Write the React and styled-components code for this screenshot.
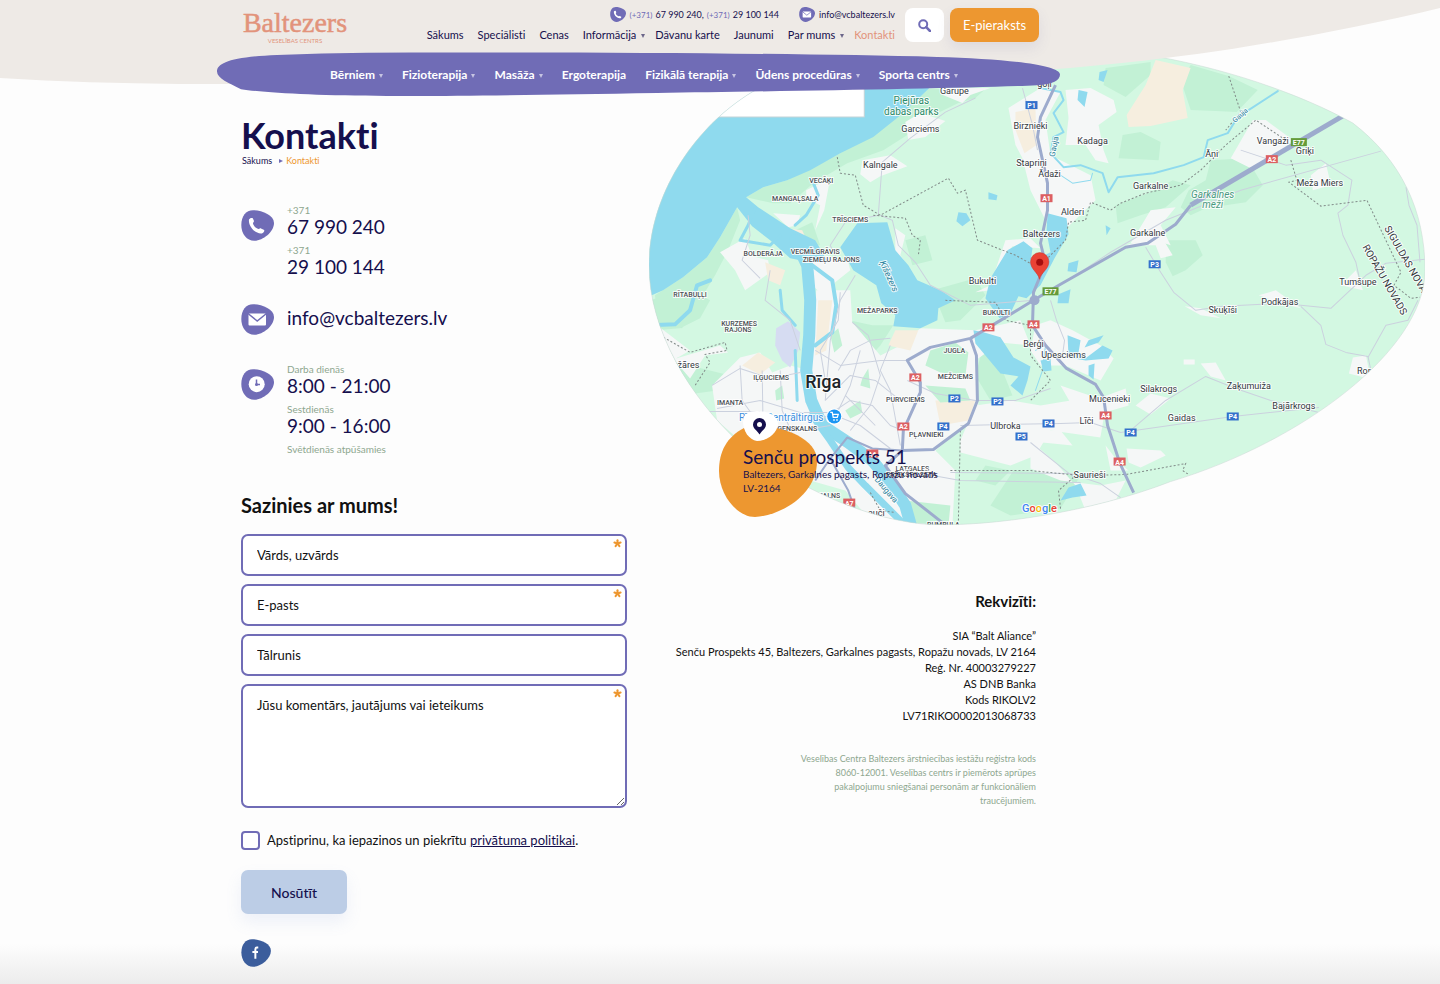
import React from "react";
import styled, { createGlobalStyle } from "styled-components";

const navy = "#150f4d";
const violet = "#706cb6";
const orange = "#ed9730";
const salmon = "#e2937b";
const sage = "#8ea78f";

const GlobalStyle = createGlobalStyle`
  * {
    box-sizing: border-box;
  }
  body {
    margin: 0;
    background: #fdfdfd;
    color: #111;
    font-family: Lato, "Open Sans", sans-serif;
    font-size: 13px;
    font-variant-ligatures: none;
  }
  h1, h2, p, ul {
    margin: 0;
    padding: 0;
  }
  a {
    color: inherit;
    text-decoration: none;
  }
  button, input, textarea {
    font-family: inherit;
    font-variant-ligatures: none;
  }
`;

const Page = styled.div`
  min-height: 100vh;
  overflow: hidden;
  background: linear-gradient(#fdfdfd, #ececec) bottom / 100% 40px no-repeat;
`;

//header
const Header = styled.header`
  position: relative;
  z-index: 2;
`;

const HeaderShape = styled.svg`
  position: absolute;
  top: 0;
  left: 0;
  width: 100%;
  height: 86px;
`;

const TopBar = styled.div`
  position: relative;
  display: flex;
  align-items: flex-start;
  max-width: 1039px;
  height: 52px;
  padding: 8px 0 0 241px;
`;

const Logo = styled.a`
  display: flex;
  flex-direction: column;
  align-items: center;
  width: 108px;
  color: ${salmon};
  font-family: "Liberation Serif", serif;
  font-size: 28px;
  line-height: 29px;
  -webkit-text-stroke: 0.5px ${salmon};
  small {
    font-family: Lato, sans-serif;
    font-size: 6px;
    line-height: 8px;
    -webkit-text-stroke: 0;
  }
`;

const TopLinks = styled.div`
  flex: 1;
  display: flex;
  flex-direction: column;
  align-items: flex-end;
  gap: 6px;
  margin-right: 10px;
  color: ${navy};
`;

const PhoneRow = styled.div`
  display: flex;
  align-items: center;
  gap: 3px;
  height: 13px;
  font-size: 9px;
  white-space: nowrap;
  small {
    color: ${violet};
    font-size: 8px;
  }
  svg {
    width: 16px;
    height: 15px;
    margin-right: 1px;
  }
  a + svg {
    margin-left: 17px;
  }
`;

const Caret = styled.i`
  display: inline-block;
  margin-left: ${p => p.$gap}px;
  vertical-align: middle;
  border: solid transparent;
  border-width: 4px 2px 0;
  border-top-color: currentColor;
  opacity: 0.6;
`;

const TopMenu = styled.nav`
  display: flex;
  gap: 14px;
  font-size: 11px;
  line-height: 16px;
  white-space: nowrap;
`;

const TopItem = styled.a`
  color: ${p => (p.$active ? salmon : navy)};
  margin-right: ${p => (p.$caret ? -4 : 0)}px;
`;

const SearchButton = styled.button`
  width: 39px;
  height: 34px;
  border: 0;
  border-radius: 8px;
  background: #fff;
  margin-right: 6px;
  padding: 3px 0 0;
`;

const BookButton = styled.button`
  width: 89px;
  height: 34px;
  border: 0;
  border-radius: 8px;
  background: ${orange};
  color: #fff;
  font-size: 13px;
  box-shadow: 0 6px 14px rgba(80, 80, 160, 0.1);
`;

const NavBar = styled.nav`
  position: relative;
  display: flex;
  align-items: center;
  width: 843px;
  height: 45px;
  margin-left: 217px;
  padding-left: 113px;
  color: #fff;
  font-size: 12px;
  font-weight: 700;
  white-space: nowrap;
  > svg {
    position: absolute;
    inset: 0;
    width: 100%;
    height: 100%;
  }
`;

const NavItem = styled.a`
  position: relative;
  margin-right: 19px;
`;

//content
const Main = styled.main`
  display: grid;
  grid-template-columns: 386px minmax(0, 1fr);
  column-gap: 22px;
  margin-top: -47px;
  padding: 0 15px 16px 241px;
`;

const Left = styled.div`
  padding-top: 66px;
`;

const Title = styled.h1`
  color: ${navy};
  font-size: 36px;
  line-height: 39px;
  font-weight: 700;
`;

const Breadcrumbs = styled.div`
  display: flex;
  align-items: center;
  gap: 7px;
  padding: 0 1px;
  color: ${navy};
  font-size: 9px;
  line-height: 11px;
  a:last-child {
    color: ${orange};
    margin-left: -4px;
  }
  i {
    border: solid transparent;
    border-width: 2px 0 2px 4px;
    border-left-color: ${violet};
  }
`;

const Contacts = styled.div`
  display: flex;
  flex-direction: column;
  gap: 27px;
  margin-top: 37px;
`;

const Contact = styled.div`
  display: flex;
  align-items: ${p => (p.$center ? "center" : "flex-start")};
  gap: 13px;
  > svg {
    width: 33px;
    height: 31px;
    margin-top: ${p => (p.$center ? 0 : 7)}px;
  }
  > a {
    padding-bottom: 4px;
    color: ${navy};
    font-size: 19px;
    line-height: 20px;
  }
`;

const Lines = styled.div`
  display: grid;
  row-gap: 6px;
  color: ${navy};
  font-size: 19px;
  line-height: 20px;
  small {
    display: block;
    color: ${sage};
    font-size: 10px;
    line-height: 14px;
  }
`;

const Form = styled.form`
  display: flex;
  flex-direction: column;
  align-items: flex-start;
  gap: 8px;
  margin-top: 36px;
`;

const FormTitle = styled.h2`
  font-size: 20px;
  line-height: 26px;
  margin-bottom: 8px;
`;

const Field = styled.label`
  position: relative;
  display: block;
  width: 100%;
  input, textarea {
    display: block;
    width: 100%;
    height: 42px;
    padding: 0 14px;
    border: 2px solid ${violet};
    border-radius: 7px;
    background: #fff;
    font-size: 13px;
  }
  textarea {
    height: 124px;
    padding-top: 11px;
    resize: vertical;
  }
  ::placeholder {
    color: #111;
    opacity: 1;
  }
  svg {
    position: absolute;
    top: 5px;
    right: 5px;
  }
`;

const Consent = styled.label`
  display: flex;
  align-items: center;
  gap: 7px;
  margin-top: 14px;
  line-height: 20px;
  a {
    color: ${navy};
    text-decoration: underline;
  }
  input {
    appearance: none;
    width: 19px;
    height: 19px;
    margin: 0;
    border: 2px solid ${violet};
    border-radius: 4px;
    background: #fff;
  }
`;

const SubmitButton = styled.button`
  width: 106px;
  height: 44px;
  margin-top: 12px;
  border: 0;
  border-radius: 7px;
  background: #bccde6;
  color: ${navy};
  font-size: 14px;
  font-weight: 500;
  box-shadow: 0 8px 16px rgba(120, 150, 210, 0.12);
`;

const Social = styled.a`
  margin-top: 17px;
  svg {
    display: block;
    width: 30px;
    height: 28px;
  }
`;

const MapBlock = styled.div`
  position: relative;
  > svg {
    display: block;
    width: 100%;
    height: auto;
  }
`;

const Address = styled.address`
  position: absolute;
  z-index: 1;
  left: 70px;
  bottom: 7px;
  width: 320px;
  height: 107px;
  padding: 35px 0 0 24px;
  color: ${navy};
  font-style: normal;
  font-size: 10px;
  line-height: 14px;
  white-space: nowrap;
  strong {
    display: block;
    font-size: 19px;
    line-height: 21px;
    font-weight: 400;
  }
  svg {
    position: absolute;
    top: 0;
    left: 0;
    z-index: -1;
  }
`;

const Details = styled.section`
  max-width: 387px;
  margin-top: 66px;
  text-align: right;
  font-size: 11px;
  line-height: 16px;
  h2 {
    font-size: 15px;
    line-height: 20px;
    margin-bottom: 17px;
  }
`;

const Note = styled.p`
  max-width: 250px;
  margin: 28px 0 0 auto;
  color: ${sage};
  font-size: 9px;
  line-height: 14px;
`;

const blob =
  "M.3 15C.3 6 5 .2 12 .2C21 .2 33 5 33 13C33 22 22 30.5 13.500 30.800C6 31 .3 24 .3 15Z";

const Blob = ({ color = violet, children }) => (
  <svg viewBox="0 0 33 31" aria-hidden="true">
    <path d={blob} fill={color} />
    {children}
  </svg>
);

const PhoneIcon = () => (
  <Blob>
    <path
      fill="#fff"
      d="M8 9.5C8.7 8 10.700 7.500 11.800 8.300L13 11C12.900 12.100 11.900 12.500 12 13.500C12.600 16 15 18.500 17.600 19C18.500 19.200 19 18.200 20 18.400L23.200 20C23.600 21.500 22.500 23 20.800 23.400C14 24.300 7 15.500 8 9.500Z"
    />
  </Blob>
);

const MailIcon = () => (
  <Blob>
    <rect x="7.500" y="9.500" width="17.500" height="12" rx="1" fill="#fff" />
    <path d="M7 9.500L16.200 17L25.500 9.500" fill="none" stroke={violet} strokeWidth="1.500" />
  </Blob>
);

const ClockIcon = () => (
  <Blob>
    <circle cx="15.700" cy="15.200" r="8" fill="#fff" />
    <path d="M15.500 10.500V15.500H19" fill="none" stroke={violet} strokeWidth="1.500" />
    <circle cx="15.500" cy="15.500" r="1.500" fill={violet} />
  </Blob>
);

const Star = () => (
  <svg width="9" height="9" viewBox="-5 -5 10 10" aria-hidden="true">
    {[0, 72, 144, 216, 288].map(a => (
      <path key={a} d="M0 0L0 3.600" transform={`rotate(${a + 36})`} stroke={orange} strokeWidth="2.300" strokeLinecap="round" />
    ))}
  </svg>
);

//map
const Label = styled.text`
  font-family: Roboto, sans-serif;
  font-size: ${p => p.$size || 9}px;
  font-weight: ${p => p.$weight || 400};
  font-style: ${p => p.$style || "normal"};
  fill: ${p => p.$fill || "#33383d"};
  text-anchor: middle;
  paint-order: stroke;
  stroke: rgba(255, 255, 255, 0.85);
  stroke-width: 2px;
  stroke-linejoin: round;
`;

const ShieldText = styled.text`
  font-family: Roboto, sans-serif;
  font-size: 7px;
  font-weight: 700;
  fill: #fff;
  text-anchor: middle;
`;

const places = [
  ["Garupe", 954, 94], ["Garciems", 920, 132], ["Kalngale", 880, 168],
  ["Birznieki", 1030, 129], ["Stapriņi", 1031, 166], ["Ādaži", 1049, 177],
  ["Kadaga", 1092, 144], ["Āņi", 1211, 157], ["Vangaži", 1272, 144],
  ["Griķi", 1304, 154], ["Meža Miers", 1319, 186], ["Garkalne", 1150, 189],
  ["Alderi", 1072, 215], ["Garkalne", 1147, 236], ["Baltezers", 1041, 237],
  ["Bukulti", 982, 284], ["Tumšupe", 1357, 285], ["Podkājas", 1279, 305],
  ["Skuķīši", 1222, 313], ["Berģi", 1033, 347], ["Upesciems", 1063, 358],
  ["Silakrogs", 1158, 392], ["Zaķumuiža", 1248, 389], ["Mucenieki", 1109, 402],
  ["Gaidas", 1181, 421], ["Bajārkrogs", 1293, 409], ["Līči", 1086, 424],
  ["Ulbroka", 1005, 429], ["Saurieši", 1089, 477], ["Ror", 1363, 374],
  ["ežāres", 686, 368], ["auči", 876, 515], ["goļi", 1044, 87],
];

const districts = [
  ["VECĀĶI", 821, 183], ["MANGAĻSALA", 795, 201], ["TRĪSCIEMS", 850, 222],
  ["BOLDERĀJA", 763, 256], ["VECMĪLGRĀVIS", 815, 254], ["ZIEMEĻU RAJONS", 831, 262],
  ["RĪTABUĻĻI", 690, 297], ["KURZEMES", 739, 326], ["RAJONS", 738, 332],
  ["MEŽAPARKS", 877, 313], ["BUKULTI", 996, 315], ["JUGLA", 954, 353],
  ["IĻĢUCIEMS", 771, 380], ["MEŽCIEMS", 955, 379], ["IMANTA", 730, 405],
  ["PURVCIEMS", 905, 402], ["ĢENSKALNS", 797, 431], ["PĻAVNIEKI", 926, 437],
  ["LATGALES", 912, 470], ["PRIEKŠPILSĒTA", 911, 476], ["KALNS", 829, 497],
  ["RUMBULA", 943, 526],
];

const shields = [
  ["P1", 1031, 105], ["A1", 1046, 198], ["E77", 1298, 142], ["A2", 1271, 159],
  ["P3", 1154, 264], ["E77", 1050, 291], ["A2", 988, 327], ["A4", 1033, 324],
  ["A2", 915, 377], ["P2", 954, 398], ["P2", 997, 401], ["A2", 903, 426],
  ["P4", 943, 426], ["P5", 1021, 436], ["P4", 1048, 423], ["A4", 1105, 415],
  ["P4", 1130, 432], ["P4", 1232, 416], ["A4", 1119, 461], ["A6", 872, 453],
  ["A7", 849, 502],
];

const shieldColors = { A: "#dc5f62", P: "#3470cb", E: "#659b3a" };

const woods = [
  "M746 197L763 187L787 180L840 153L903 113L928 89L985 89L975 98L958 103L917 123L907 135L883 150L847 163L813 183L790 203L773 203Z",
  "M737 207L720 237L707 257L683 277L655 295L658 325L682 328L700 300L715 275L728 250L740 220Z",
  "M649 300L690 290L710 300L700 318L680 328L655 330Z",
  "M1105 68L1150 62L1150 75L1125 97L1103 85Z",
  "M1190 65L1228 76L1257 90L1236 112L1215 111L1190 110L1180 80Z",
  "M1122 135L1140 132L1160 142L1158 160L1118 158Z",
  "M1210 160L1246 158L1262 185L1245 202L1205 208L1190 215L1180 207L1188 190L1205 180Z",
  "M1115 205L1150 192L1172 180L1190 185L1165 207L1140 215L1117 223Z",
  "M1165 240L1195 240L1202 255L1185 270L1172 276L1165 262Z",
  "M849 320L872 325L893 325L880 345L868 358L852 345Z",
  "M795 230L812 222L820 245L800 247Z",
  "M932 290L975 278L985 295L960 320L945 322Z",
  "M983 345L1000 365L1012 395L990 400L975 375Z",
  "M660 345L690 365L730 375L717 390L695 393L676 373Z",
  "M1013 470L1080 475L1060 508L1010 515L990 505Z",
  "M905 240L925 235L932 260L912 265Z",
];

const urban = [
  "M905 122L920 113L945 121L925 137L908 140Z",
  "M862 160L890 155L907 166L880 176L870 182L860 174Z",
  "M940 88L990 88L970 95L962 103L940 94Z",
  "M1065 90L1090 88L1113 100L1116 112L1098 125L1103 150L1108 163L1095 160L1085 145L1065 145L1068 118Z",
  "M1008 108L1040 88L1060 92L1045 120L1050 155L1090 175L1095 200L1068 226L1045 220L1030 190L1022 158L1015 145Z",
  "M1230 158L1252 120L1265 120L1292 140L1272 158L1250 168Z",
  "M1310 175L1325 163L1330 185L1312 190Z",
  "M1130 243L1150 210L1175 207L1160 225L1170 245L1155 240Z",
  "M1125 245L1160 235L1172 255L1160 258L1155 245Z",
  "M773 213L800 215L797 225L788 227Z",
  "M720 252L745 238L752 256L768 260L770 272L745 290L735 270Z",
  "M790 232L806 236L810 252L828 256L848 262L850 270L835 282L828 300L812 285L805 256Z",
  "M806 190L830 178L824 210L815 230L820 205L806 198Z",
  "M895 228L905 235L900 255L905 262L895 260Z",
  "M990 285L1005 240L1030 238L1040 248L1012 246L1000 262L990 290L975 292Z",
  "M816 290L850 290L852 322L880 355L900 345L920 328L975 330L1020 320L1030 345L1000 342L975 360L978 405L965 425L935 450L955 470L952 525L870 520L845 490L810 480L790 465L740 440L717 420L712 385L740 357L760 352L772 372L790 365L810 370Z",
  "M657 325L690 350L676 358L720 345L728 352L705 355L690 378L668 352Z",
  "M975 405L1010 400L1040 405L1070 400L1090 405L1100 437L1050 430L1035 455L1010 465L960 452L960 440Z",
  "M1035 325L1050 320L1072 330L1100 345L1113 358L1100 380L1065 365L1040 365L1030 350Z",
  "M1060 385L1098 398L1125 388L1128 405L1104 412L1100 436L1080 420Z",
  "M1135 405L1150 393L1170 398L1150 414Z",
  "M1126 448L1160 450L1165 455L1140 467L1128 462Z",
  "M1105 445L1118 462L1128 470L1110 470Z",
  "M1040 430L1060 430L1072 445L1042 442Z",
  "M1030 440L1055 462L1075 485L1085 510L1115 500L1125 480L1100 485L1060 480L1030 468Z",
  "M1184 306L1200 308L1220 318L1200 315Z",
  "M1258 295L1275 290L1300 308L1280 303Z",
  "M1183 359L1194 359L1194 364L1183 364Z",
  "M1200 363L1215 362L1225 380L1210 376Z",
  "M1352 357L1365 355L1368 370L1375 380L1348 373Z",
  "M1340 285L1355 270L1362 290Z",
];

const fields = [
  "M1155 60L1190 68L1182 90L1187 118L1150 126L1128 127L1126 115L1145 85Z",
  "M1015 112L1035 108L1036 145L1024 153L1015 130Z",
  "M818 300L832 300L826 350L815 355Z",
  "M895 330L918 330L910 350L888 345Z",
  "M935 400L975 400L968 420L940 425Z",
  "M742 365L758 352L775 362L760 374Z",
  "M765 262L785 270L780 285L768 280Z",
  "M785 228L802 230L808 243L795 240Z",
];

const parks =
  "M830 335L838 328L842 345L834 352ZM862 378L868 368L870 388L860 385ZM775 390L782 385L784 398L776 400ZM930 350L955 342L968 352L965 375L940 372L925 365ZM925 385L965 388L970 400L940 402ZM985 465L1010 470L995 485L975 480ZM905 500L950 505L948 525L910 522ZM845 410L860 400L862 412L850 418Z";

const water = [
  "M640 40L960 40L928 89L903 113L873 137L840 153L810 170L787 180L763 187L746 197L758 207L790 228L815 240L828 262L810 262L790 258L770 240L752 226L737 207L720 237L707 257L683 277L663 290L640 300Z",
  "M840 247L857 223L887 222L895 250L908 265L917 280L940 290L955 300L938 308L937 320L920 328L893 326L895 315L881 303L876 285L853 270Z",
  "M985 298L990 278L1007 250L1023 241L1032 248L1030 262L1050 252L1046 232L1047 213L1066 218L1068 234L1054 258L1040 285L1026 298L1018 296L1010 313L999 318Z",
  "M973 330L983 332L1000 337L1013 357L1030 366L1027 380L1022 395L1010 385L1018 376L1000 373L985 355L975 343Z",
  "M1067 335L1080 340L1078 352L1086 357L1102 345L1112 350L1108 358L1085 360L1068 357Z",
  "M1088 340L1103 335L1098 342L1084 347Z",
  "M1040 360L1050 358L1051 370L1043 371Z",
  "M1088 365L1094 363L1093 379L1088 375Z",
  "M1058 294L1070 289L1068 303L1057 303Z",
  "M958 212L966 213L970 220L962 226L956 221Z",
  "M1068 263L1078 260L1076 272L1067 271Z",
  "M1078 90L1087 92L1084 107L1077 100Z",
  "M1099 72L1107 70L1103 82L1098 80Z",
  "M1068 487L1080 483L1086 495L1072 497L1060 500Z",
  "M988 192L997 195L996 200L988 199Z",
  "M1105 225L1110 228L1106 235Z",
];

const minorRoads = [
  "M975 98L945 112L910 138L882 162L878 215L845 222L830 245L838 262",
  "M880 215L892 220L898 245L915 262L930 285L970 305L1033 300",
  "M1022 88L1032 125L1037 150",
  "M1145 247L1160 272L1173 292L1195 310L1222 306L1280 303L1330 308L1365 275L1385 263L1424 259",
  "M1405 187L1408 205L1416 225L1419 262",
  "M1417 300L1407 320L1385 325L1367 357",
  "M1300 306L1320 325L1325 344L1345 352L1367 356L1370 370",
  "M960 425L1005 424L1060 423L1090 422L1120 432L1232 416L1318 407",
  "M1130 430L1165 400L1205 376L1235 388L1270 400L1318 412",
  "M907 380L935 393L975 400L1015 400L1050 388",
  "M838 370L850 350L870 340L890 338",
  "M815 350L840 365L880 360L907 360",
  "M825 400L850 375L875 380L900 400",
  "M820 420L850 400L872 405L890 425L903 430",
  "M852 322L868 335L880 375L870 405L850 430",
  "M825 380L820 350L838 320L840 292",
  "M890 345L880 370L890 390L900 445",
  "M835 415L860 425L890 448M845 395L875 425M860 350L850 385L838 410",
  "M740 365L742 400L760 425L800 430L830 425",
  "M717 408L760 400L800 412L840 412",
  "M762 370L763 430M780 370L782 410L795 440",
  "M712 385L740 368L770 378L800 372",
  "M1050 300L1056 320L1064 340L1062 355",
  "M640 400L700 411L760 411",
  "M950 472L1070 473L1100 483L1120 497",
  "M1030 442L1055 462L1075 478",
  "M905 470L960 480L1080 482",
  "M748 215L750 235L742 260L760 278",
  "M770 270L765 300L790 320L800 350",
  "M855 275L840 300L830 340L825 400",
  "M1055 288L1110 252L1165 220L1240 190L1380 151",
  "M1240 150L1285 165L1320 160L1351 180L1347 205L1337 213L1342 235L1355 262L1360 285",
];

const borders = [
  "M837 157L840 173L855 175L863 205L880 215L948 178L957 193L965 190L977 240L1015 255L1035 266",
  "M873 215L905 218L912 235L920 240L918 255",
  "M1045 260L1065 240L1068 222L1085 220L1090 202L1110 210L1120 203L1145 193L1180 185L1200 170L1225 145L1255 120L1285 140",
  "M1228 76L1240 112L1225 130",
  "M1290 160L1296 180L1288 182L1320 206L1366 200L1400 272L1393 285L1410 298L1419 297",
  "M660 335L690 352L725 342L727 350L705 354L710 362L695 385",
  "M945 300L995 302L1005 320L1030 325L1030 355L1050 380L1030 400",
  "M960 430L958 520M870 492L880 510L895 512",
  "M950 470L1030 470L1080 475L1125 474L1185 463L1182 470L1188 474",
  "M1060 508L1058 490L1075 475",
];

const outline =
  "M649 265C649 195 694 127 752 92C825 52 1015 40 1140 54C1220 66 1300 94 1352 123C1400 160 1424 210 1424 270C1424 350 1300 442 1170 481C1090 512 990 526 930 524C870 520 800 490 740 443C690 397 649 330 649 265Z";

const ContactMap = () => (
  <svg viewBox="649 50 775 474" role="img" aria-label="Karte">
    <clipPath id="map-outline">
      <path d={outline} />
    </clipPath>
    <g clipPath="url(#map-outline)">
      <path d="M640 40H1430V530H640Z" fill="#d3f8e2" />
      <g fill="#c2f1d5">{woods.map(d => <path key={d} d={d} />)}</g>
      <g fill="#f5f7f7">{urban.map(d => <path key={d} d={d} />)}</g>
      <g fill="#f6eedf">{fields.map(d => <path key={d} d={d} />)}</g>
      <path d={parks} fill="#c2f1d5" />
      <path d="M776 328L788 321L800 332L798 350L790 367L782 360L775 345Z" fill="#d6dcf2" />
      <g fill="#8fdaee">{water.map(d => <path key={d} d={d} />)}</g>
      <g fill="none" stroke="#8fdaee" strokeLinejoin="round" strokeLinecap="round">
        <path d="M795 240L807 265L810 300L809 335L806 370L811 400L822 425L848 442L872 460L890 482L905 505L912 530" strokeWidth="12" />
        <path d="M812 415L830 440L848 467L865 485L900 520" strokeWidth="7" />
        <path d="M812 265L832 280L836 305L832 332L815 345M650 325L675 324L690 310L697 285L710 280" strokeWidth="4" />
        <path d="M812 180L818 195L806 215L795 225M755 207L748 225L740 240M780 290L782 310L795 325M795 350L797 400M740 240L770 245L780 235" strokeWidth="3" />
        <path d="M1277 91L1237 117L1227 133L1207 140L1203 157L1183 165L1153 173L1117 177L1108 192L1102 173L1080 165L1063 167L1050 153L1053 137L1063 132L1053 113L1063 100L1060 92L1040 88" strokeWidth="2" />
        <path d="M1035 350L1045 345L1042 370L1035 390M1060 175L1072 183L1090 180L1092 173" strokeWidth="1" />
      </g>
      <g fill="none" stroke="#cbd1de" strokeWidth="1" strokeLinejoin="round">
        {minorRoads.map(d => <path key={d} d={d} />)}
      </g>
      <g fill="none" stroke="#808a88" strokeWidth="1" strokeDasharray="2 2">
        {borders.map(d => <path key={d} d={d} />)}
      </g>
      <g fill="none" stroke="#9dabcd" strokeWidth="3" strokeLinejoin="round">
        <path d="M1055 85L1040 117L1037 137L1047 183L1047 210L1040 243L1045 263L1033 292L1032 325L1045 345L1066 368L1095 384L1103 397L1107 425L1119 462L1133 492" />
        <path d="M1190 205L1175 224L1147 243L1125 247L1060 284L1033 300L1000 320L970 338L930 347L907 360L920 382L920 392L903 430L902 450" />
        <path d="M970 338L976 355L977 400L968 423L933 449L902 450L885 465L905 493L942 522" />
        <path d="M902 450L872 448L847 437L830 458L815 480M830 458L848 490L855 510" strokeWidth="2" />
        <path d="M1345 114L1190 205" strokeWidth="5" />
      </g>
      <circle cx="1034" cy="300" r="5" fill="#9dabcd" />
      <path d="M690 88H864V117H690Z" fill="#fff" />
      <path d="M700 117H864V88" fill="none" stroke="#c4d3d8" />
      {places.map(([name, x, y]) => <Label key={name + x} x={x} y={y}>{name}</Label>)}
      {districts.map(([name, x, y]) => (
        <Label key={name} x={x} y={y} $size={7} $weight={500} $fill="#4c5055">{name}</Label>
      ))}
      <Label x="823" y="388" $size={18} $weight={500} $fill="#202428">Rīga</Label>
      <Label x="911" y="104" $size={10} $fill="#2b8a68">Piejūras</Label>
      <Label x="911" y="115" $size={10} $fill="#2b8a68">dabas parks</Label>
      <Label x="1212" y="198" $size={10} $style="italic" $fill="#4a9a80">Garkalnes</Label>
      <Label x="1212" y="208" $size={10} $style="italic" $fill="#4a9a80">meži</Label>
      <Label x="781" y="421" $size={10} $fill="#3b8fe0">Rīgas Centrāltirgus</Label>
      <Label transform="translate(886 277) rotate(66)" $style="italic" $fill="#27809a">Ķīšezers</Label>
      <Label transform="translate(1056 147) rotate(-78)" $size={8} $fill="#27809a">Gauja</Label>
      <Label transform="translate(1241 117) rotate(-42)" $size={7} $fill="#27809a">Gauja</Label>
      <Label transform="translate(884 491) rotate(50)" $size={8} $fill="#27809a">Daugava</Label>
      <Label transform="translate(1405 266) rotate(60)" $size={10}>SIGULDAS NOVADS</Label>
      <Label transform="translate(1381 281) rotate(60)" $size={10}>ROPAŽU NOVADS</Label>
      {shields.map(([name, x, y]) => (
        <g key={name + x}>
          <rect x={x - (name.length > 2 ? 8 : 6)} y={y - 4} width={name.length > 2 ? 16 : 12} height="8" fill={shieldColors[name[0]]} />
          <ShieldText x={x} y={y + 3}>{name}</ShieldText>
        </g>
      ))}
      <circle cx="834" cy="416" r="8" fill="#fff" />
      <circle cx="834" cy="416" r="7" fill="#1b96f3" />
      <path d="M830 412H832L833 417H837L838 414H833" fill="none" stroke="#fff" strokeWidth="1.300" />
      <path d="M833 419.500H834.500M836 419.500H837.500" stroke="#fff" strokeWidth="1.500" />
      <Label x="1039" y="511" $size={11} $weight={500}>
        <tspan fill="#4285f4">G</tspan>
        <tspan fill="#ea4335">o</tspan>
        <tspan fill="#fbbc05">o</tspan>
        <tspan fill="#4285f4">g</tspan>
        <tspan fill="#34a853">l</tspan>
        <tspan fill="#ea4335">e</tspan>
      </Label>
    </g>
    <path d="M1039 279C1037.500 272 1030 269 1030 261.500A9.200 9.200 0 0 1 1048.400 261.500C1048.400 269 1040.500 272 1039 279Z" fill="#ea4335" stroke="#c5322a" strokeWidth="0.500" />
    <circle cx="1039.200" cy="262" r="3.500" fill="#a50e0e" />
    <path d={outline} fill="none" stroke="#c9d6d2" strokeWidth="0.500" />
  </svg>
);

const topMenu = [
  ["Sākums"], ["Speciālisti"], ["Cenas"], ["Informācija", true],
  ["Dāvanu karte"], ["Jaunumi"], ["Par mums", true], ["Kontakti"],
];

const mainMenu = [
  ["Bērniem", true], ["Fizioterapija", true], ["Masāža", true], ["Ergoterapija"],
  ["Fizikālā terapija", true], ["Ūdens procedūras", true], ["Sporta centrs", true],
];

const PageHeader = () => (
  <Header>
    <HeaderShape viewBox="0 0 1440 86" preserveAspectRatio="none" aria-hidden="true">
      <path d="M0 0H1440V8C1370 25 1290 40 1225 50C1150 61 1080 68 1000 73L600 84L180 84C120 83 60 82 0 78Z" fill="#eeeae6" />
    </HeaderShape>
    <TopBar>
      <Logo href="#">
        Baltezers
        <small>VESELĪBAS CENTRS</small>
      </Logo>
      <TopLinks>
        <PhoneRow>
          <PhoneIcon />
          <small>(+371)</small>
          <a href="tel:+37167990240">67 990 240,</a>
          <small>(+371)</small>
          <a href="tel:+37129100144">29 100 144</a>
          <MailIcon />
          <a href="mailto:info@vcbaltezers.lv">info@vcbaltezers.lv</a>
        </PhoneRow>
        <TopMenu>
          {topMenu.map(([name, caret]) => (
            <TopItem key={name} href="#" $caret={caret} $active={name === "Kontakti"}>
              {name}
              {caret && <Caret $gap={5} />}
            </TopItem>
          ))}
        </TopMenu>
      </TopLinks>
      <SearchButton aria-label="Meklēt">
        <svg width="13" height="13" viewBox="0 0 13 13" fill="none" stroke={violet} strokeWidth="2">
          <circle cx="5.200" cy="5.200" r="4" />
          <path d="M8.200 8.200L12 12" strokeWidth="2.500" strokeLinecap="round" />
        </svg>
      </SearchButton>
      <BookButton>E-pieraksts</BookButton>
    </TopBar>
    <NavBar>
      <svg viewBox="0 0 843 46" preserveAspectRatio="none" aria-hidden="true">
        <path d="M0 20C0 11 15 5 60 3C120 .5 180 .5 240 .5C420 0 600 2 720 5C790 7 843 13 843 23C843 29 836 33 820 34C760 37 560 40 440 42C320 44 230 45.500 170 45C100 44.500 50 42 24 38C12 32 0 27 0 20Z" fill={violet} />
      </svg>
      {mainMenu.map(([name, caret]) => (
        <NavItem key={name} href="#">
          {name}
          {caret && <Caret $gap={4} />}
        </NavItem>
      ))}
    </NavBar>
  </Header>
);

const ContactForm = () => (
  <Form onSubmit={e => e.preventDefault()}>
    <FormTitle>Sazinies ar mums!</FormTitle>
    <Field>
      <input aria-label="Vārds, uzvārds" placeholder="Vārds, uzvārds" />
      <Star />
    </Field>
    <Field>
      <input type="email" aria-label="E-pasts" placeholder="E-pasts" />
      <Star />
    </Field>
    <Field>
      <input type="tel" aria-label="Tālrunis" placeholder="Tālrunis" />
    </Field>
    <Field>
      <textarea aria-label="Komentārs" placeholder="Jūsu komentārs, jautājums vai ieteikums" />
      <Star />
    </Field>
    <Consent>
      <input type="checkbox" />
      <span>
        Apstiprinu, ka iepazinos un piekrītu <a href="#">privātuma politikai</a>.
      </span>
    </Consent>
    <SubmitButton>Nosūtīt</SubmitButton>
    <Social href="#" aria-label="Facebook">
      <Blob color="#3b5d9c">
        <path d="M19 9.500H17.500C16 9.500 15.800 10.300 15.800 11.500V22M12.500 14.500H18.700" fill="none" stroke="#fff" strokeWidth="2.200" />
      </Blob>
    </Social>
  </Form>
);

const App = () => (
  <Page>
    <GlobalStyle />
    <PageHeader />
    <Main>
      <Left>
        <Title>Kontakti</Title>
        <Breadcrumbs>
          <a href="#">Sākums</a>
          <i />
          <a href="#">Kontakti</a>
        </Breadcrumbs>
        <Contacts>
          <Contact>
            <PhoneIcon />
            <Lines>
              <div><small>+371</small>67 990 240</div>
              <div><small>+371</small>29 100 144</div>
            </Lines>
          </Contact>
          <Contact $center>
            <MailIcon />
            <a href="mailto:info@vcbaltezers.lv">info@vcbaltezers.lv</a>
          </Contact>
          <Contact>
            <ClockIcon />
            <Lines>
              <div><small>Darba dienās</small>8:00 - 21:00</div>
              <div><small>Sestdienās</small>9:00 - 16:00</div>
              <small>Svētdienās atpūšamies</small>
            </Lines>
          </Contact>
        </Contacts>
        <ContactForm />
      </Left>
      <div>
        <MapBlock>
          <ContactMap />
          <Address>
            <svg width="100" height="107" viewBox="0 0 100 107" aria-hidden="true">
              <path d="M25 17C40 10 98 20 98 50C98 85 60 105 36 106C18 106 0 84 0 60C0 40 8 26 25 17Z" fill={orange} />
              <path d="M24 10C24 3 30 0 38 0C48 0 59 4 59 13C58 24 46 30 38 30C30 29 24 20 24 10Z" fill="#fff" />
              <path d="M40.500 23.500C38 19 34 18 34 13.500A6.500 6.500 0 0 1 47 13.500C47 18 43 19 40.500 23.500Z" fill={navy} />
              <circle cx="40.500" cy="13.500" r="2.500" fill="#fff" />
            </svg>
            <strong>Senču prospekts 51</strong>
            Baltezers, Garkalnes pagasts, Ropažu novads
            <br />
            LV-2164
          </Address>
        </MapBlock>
        <Details>
          <h2>Rekvizīti:</h2>
          <p>SIA “Balt Aliance”</p>
          <p>Senču Prospekts 45, Baltezers, Garkalnes pagasts, Ropažu novads, LV 2164</p>
          <p>Reģ. Nr. 40003279227</p>
          <p>AS DNB Banka</p>
          <p>Kods RIKOLV2</p>
          <p>LV71RIKO0002013068733</p>
          <Note>
            Veselības Centra Baltezers ārstniecības iestāžu reģistra kods
            8060-12001. Veselības centrs ir piemērots aprūpes
            pakalpojumu sniegšanai personām ar funkcionāliem traucējumiem.
          </Note>
        </Details>
      </div>
    </Main>
  </Page>
);

export default App;
